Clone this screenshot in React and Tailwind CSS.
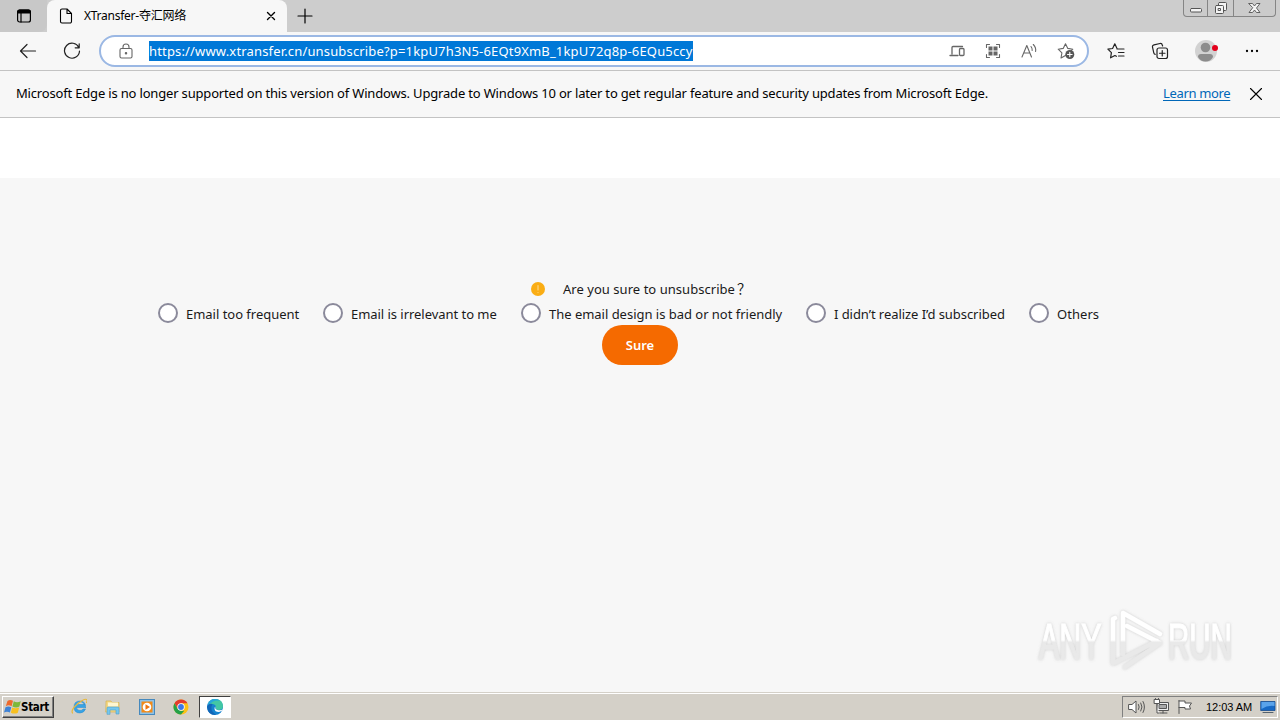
import React from 'react';

function Svg({ w = 16, h = 16, vb, className = '', children, sw = 1.1 }) {
  return (
    <svg width={w} height={h} viewBox={vb || `0 0 ${w} ${h}`} fill="none" stroke="currentColor" strokeWidth={sw} strokeLinecap="round" strokeLinejoin="round" className={`block shrink-0 ${className}`}>
      {children}
    </svg>
  );
}

function TabStrip() {
  return (
    <div className="flex h-8 w-full shrink-0 items-start bg-[#cdcdcd]">
      <div className="flex h-8 w-[47px] items-center justify-center rounded-br-lg bg-[#c8c8c8]">
        <Svg w={16} h={16} className="text-black" sw={1.2}>
          <rect x="1.6" y="2" width="12.8" height="12" rx="2" />
          <path d="M1.6 5V4a2 2 0 0 1 2-2h8.8a2 2 0 0 1 2 2v1z" fill="currentColor" />
          <path d="M5 5v9" />
        </Svg>
      </div>
      <div className="flex h-8 w-[240px] items-center rounded-t-lg bg-[#f7f7f7] pl-3">
        <Svg w={14} h={16} className="text-black">
          <path d="M8 1H3a1.500 1.500 0 0 0-1.500 1.500v11A1.500 1.500 0 0 0 3 15h8a1.500 1.500 0 0 0 1.500-1.500V5.500zM8 1v4.500h4.500" />
        </Svg>
        <span className="ml-[11px] w-[182px] whitespace-nowrap text-[12px] leading-4 tracking-[-0.25px] text-black">XTransfer-夺汇网络</span>
        <Svg w={10} h={10} className="text-black" sw={1.4}><path d="M1.500 1.500l7 7M8.500 1.500l-7 7" /></Svg>
      </div>
      <div className="flex h-8 w-[35px] items-center justify-center">
        <Svg w={16} h={16} className="text-black" sw={1.2}><path d="M8 1v14M1 8h14" /></Svg>
      </div>
      <div className="ml-auto mr-[4px] flex h-[17px] rounded-b border border-t-0 border-[#858585] bg-[#cbcbcb] text-[#555]">
        <div className="flex w-[24px] items-end justify-center border-r border-[#858585] pb-[3px]">
          <Svg w={12} h={5} sw={1}><rect x="0.5" y="0.5" width="11" height="3.500" rx="1" fill="#f4f4f4" /></Svg>
        </div>
        <div className="flex w-[26px] items-center justify-center border-r border-[#858585]">
          <Svg w={14} h={14} sw={1}>
            <rect x="4.500" y="1.500" width="8" height="8" rx="1" fill="#f4f4f4" />
            <rect x="1.500" y="4.500" width="8" height="8" rx="1" fill="#f4f4f4" />
            <rect x="4.500" y="7.500" width="2" height="2" />
          </Svg>
        </div>
        <div className="flex w-[41px] items-center justify-center">
          <Svg w={13} h={12} sw={0.9}><path d="M1 1.500h3.500l2 2.500 2-2.500H12L8.500 6l3.500 4.500H8.500l-2-2.500-2 2.500H1L4.500 6z" fill="#f4f4f4" /></Svg>
        </div>
      </div>
    </div>
  );
}

function Toolbar() {
  return (
    <div className="flex h-[39px] w-full shrink-0 items-center border-b border-[#c3c3c3] bg-[#f7f7f7]">
      <Svg w={18} h={16} className="ml-[19px] text-[#222]" sw={1.2}><path d="M8 1.500L1.500 8 8 14.500M1.500 8H16.500" /></Svg>
      <Svg w={18} h={18} className="ml-[26px] text-[#222]" sw={1.2}><path d="M15.800 5.500A7.500 7.500 0 1 0 16.500 9M16.200 1.800v4h-4" /></Svg>
      <div className="ml-[18px] flex h-8 w-[990px] items-center rounded-full border-2 border-[#9bb8e4] bg-white text-[#666]">
        <Svg w={14} h={16} className="ml-[18px]"><rect x="1" y="5.500" width="12" height="9.500" rx="1.500" /><path d="M4 5.500V4a3 3 0 0 1 6 0v1.500" /><circle cx="7" cy="10.300" r="0.700" fill="currentColor" /></Svg>
        <span className="ml-[16px] h-5 w-[544px] whitespace-nowrap bg-[#0078d7] text-[13px] leading-5 tracking-[0.162px] text-white">https://www.xtransfer.cn/unsubscribe?p=1kpU7h3N5-6EQt9XmB_1kpU72q8p-6EQu5ccy</span>
        <div className="ml-auto mr-[12px] flex items-center gap-5">
          <Svg w={16} h={14} sw={1.3}><path d="M3 10V3.500a1 1 0 0 1 1-1h9.500M1 11.500h8" /><rect x="10.500" y="4.500" width="4.500" height="7" rx="1" /></Svg>
          <Svg w={16} h={16} className="text-[#666]"><path d="M1.500 4.500V1.500H4.500M11.500 1.500h3V4.500M14.500 11.500v3H11.500M4.500 14.500H1.500V11.500" /><path d="M3.500 3.500h4v4h-4zM8.500 3.500h4v4h-4zM3.500 8.500h4v4h-4zM8.500 8.500h4v4h-4z" fill="currentColor" stroke="none" /></Svg>
          <Svg w={16} h={16}><path d="M1 14L5.800 2.500 10.500 14M2.600 10h6.400M10 3.500q1.500 1.700 1.200 4M12.300 1.500q3 3 2.300 7" /></Svg>
          <Svg w={18} h={18}><path d="M8.500 13.500L4 16l.9-5.200L1.200 7.200l5-.8L8.500 1.800l2.300 4.600 5 .8-1.500 1.500" /><circle cx="12.800" cy="12.500" r="4.500" fill="#555" stroke="none" /><path d="M12.800 10.200v4.600M10.500 12.500h4.600" stroke="white" /></Svg>
        </div>
      </div>
      <Svg w={18} h={18} className="ml-[18px] text-[#222]" sw={1.2}><path d="M10 6.500L7.800 1.800 5.600 6.500.9 7.200l3.500 3.500-.8 5.100 4.300-2.300 1.500.8M10 7h7M11.500 10.500H17M11.500 14H17" /></Svg>
      <Svg w={18} h={18} className="ml-[26px] text-[#222]" sw={1.2}><rect x="6" y="6" width="10.500" height="10.500" rx="2" /><path d="M11.250 8.500v5.500M8.500 11.250H14M4.200 12.300A2 2 0 0 1 2.800 10.800L1.500 5.200A2 2 0 0 1 3 2.800l6-1.300A2 2 0 0 1 11.300 3l.3 1" /></Svg>
      <Svg w={24} h={24} className="ml-[25px]"><circle cx="12" cy="12" r="11" fill="#d2d2d2" stroke="none" /><circle cx="11.500" cy="8.500" r="4.800" fill="#8c8c8c" stroke="none" /><path d="M4 18q0-3 3-3h9q3 0 3 3-2.500 4.500-7.500 4.500T4 18z" fill="#8c8c8c" stroke="none" /><circle cx="21" cy="9" r="3" fill="#e3001b" stroke="none" /></Svg>
      <Svg w={14} h={4} className="ml-[27px] text-black"><path d="M2 2h.01M7 2h.01M12 2h.01" strokeWidth="2.300" /></Svg>
    </div>
  );
}

function InfoBar() {
  return (
    <div className="flex h-[47px] w-full shrink-0 items-center border-b border-[#c3c3c3] bg-[#f7f7f7] pl-4 text-[13px] leading-5 text-black">
      <span className="-mt-[2px] w-[1147px] whitespace-nowrap tracking-[-0.175px]">Microsoft Edge is no longer supported on this version of Windows. Upgrade to Windows 10 or later to get regular feature and security updates from Microsoft Edge.</span>
      <span className="-mt-[2px] w-[67px] whitespace-nowrap tracking-[-0.34px] text-[#0067b8] underline underline-offset-2">Learn more</span>
      <Svg w={14} h={14} className="ml-[19px]" sw={1.1}><path d="M1.500 1.500l11 11M12.500 1.500l-11 11" /></Svg>
    </div>
  );
}

function Option({ label, width, spacing }) {
  return (
    <div className="flex h-6 items-center">
      <span className="size-5 shrink-0 rounded-full border-2 border-[#8b8a9b] bg-white" />
      <span className={`ml-2 mt-[1px] whitespace-nowrap ${width} ${spacing}`}>{label}</span>
    </div>
  );
}

function Watermark() {
  return (
    <svg width="214" height="76" viewBox="0 0 214 76" className="absolute bottom-[14px] right-[34px] overflow-visible">
      <defs>
        <filter id="glow" x="-10%" y="-10%" width="120%" height="120%">
          <feDropShadow dx="0" dy="0" stdDeviation="1.600" floodColor="#888" floodOpacity="0.400" />
        </filter>
        <linearGradient id="fade" x1="0" y1="0" x2="0" y2="76" gradientUnits="userSpaceOnUse">
          <stop offset="0.500" stopColor="#ffffff" />
          <stop offset="0.530" stopColor="#e9e9e9" />
        </linearGradient>
        <linearGradient id="fadeText" x1="0" y1="-57" x2="0" y2="19" gradientUnits="userSpaceOnUse">
          <stop offset="0.500" stopColor="#ffffff" />
          <stop offset="0.530" stopColor="#e9e9e9" />
        </linearGradient>
      </defs>
      <g filter="url(#glow)" fill="url(#fadeText)" stroke="url(#fadeText)" strokeWidth="1.200">
        <g transform="translate(7 57) scale(0.610 1)">
          <text x="0" y="0" fontSize="50" className="font-['Liberation_Sans',sans-serif]">ANY</text>
        </g>
        <g transform="translate(136 57) scale(0.590 1)">
          <text x="0" y="0" fontSize="50" className="font-['Liberation_Sans',sans-serif]">RUN</text>
        </g>
        <g fill="none" stroke="url(#fade)" strokeWidth="4.500" strokeLinecap="round" strokeLinejoin="round">
          <path d="M83 16l-2 1v44l3-1 41-21M91 52V11l37 21M95 24l33 17-35 24" />
        </g>
      </g>
    </svg>
  );
}

function PageContent() {
  return (
    <div className="relative flex h-[574px] w-full shrink-0 flex-col bg-[#f7f7f7]">
      <div className="h-[60px] bg-white" />
      <div className="flex flex-col items-center pt-[99px] text-[13px] leading-6 text-[#1a1a1a]">
        <div className="flex h-6 w-[219px] items-center">
          <Svg w={14} h={14}><circle cx="7" cy="7" r="7" fill="#faad14" stroke="none" /><path d="M7 3.500v4.500M7 10.500v.1" stroke="#ffd98a" /></Svg>
          <span className="ml-[18.500px] w-[173px] whitespace-nowrap tracking-[0.040px]">Are you sure to unsubscribe</span>
          <span className="ml-[2px] text-[14px]">？</span>
        </div>
        <div className="flex h-6 w-[964px] gap-6">
          <Option label="Email too frequent" width="w-[113px]" spacing="tracking-[-0.020px]" />
          <Option label="Email is irrelevant to me" width="w-[146px]" spacing="tracking-[-0.040px]" />
          <Option label="The email design is bad or not friendly" width="w-[233px]" spacing="tracking-[-0.020px]" />
          <Option label="I didn’t realize I’d subscribed" width="w-[171px]" spacing="tracking-[-0.060px]" />
          <Option label="Others" width="w-[42px]" spacing="tracking-[0.050px]" />
        </div>
        <button className="h-10 w-[76px] rounded-full bg-[#f56a00] pb-px text-[13px] font-semibold text-white">Sure</button>
      </div>
      <Watermark />
    </div>
  );
}

function Taskbar() {
  return (
    <div className="flex h-[28px] w-full shrink-0 items-center border-t border-[#d4d0c8] bg-[#d4d0c8] shadow-[inset_0_1px_0_#fff]">
      <div className="ml-[2px] flex h-[22px] w-[52px] items-center border border-b-[#404040] border-l-white border-r-[#404040] border-t-white pl-[1px] shadow-[inset_-1px_-1px_0_#808080]">
        <Svg w={17} h={16} vb="0 0 17 16">
          <path d="M3.500 2Q6 0 9 1.800L7.600 7.200Q4.500 5.500 1.800 7.200z" fill="#ef6a2c" stroke="none" />
          <path d="M9.800 2.300q3 1.800 7 0l-1.400 5.200q-3.200 1.800-7 0z" fill="#7db83a" stroke="none" />
          <path d="M1.500 8.200q2.800-1.500 5.800 0l-1.400 5.300Q3 12.200 0 13.500z" fill="#3f83d6" stroke="none" />
          <path d="M8.200 8.500q3 1.500 7 0l-1.400 5.200q-3 1.800-7 0z" fill="#f8c020" stroke="none" />
        </Svg>
        <span className="font-['DejaVu_Sans_Condensed','DejaVu_Sans',sans-serif] text-[11.5px] font-bold leading-4 tracking-[-0.300px] text-black">Start</span>
      </div>
      <div className="ml-[17px] flex items-center gap-[18px]">
        <Svg w={16} h={17}><path d="M13 6.500H5.500q.7-2.800 3.700-2.800T13 6.500zM14.500 9.500H5.500q.4 3 3.500 3 2.200 0 3-1.500h2.500Q13 15 9 15q-6 0-6-6t6-6q6 0 5.500 6.500z" fill="#36a3e6" fillRule="evenodd" stroke="#2388cd" strokeWidth="0.500" /><path d="M1.500 15q-2-3 5-9t9-4.500q1.200.7 0 3" stroke="#e8b83a" strokeWidth="1.200" /></Svg>
        <Svg w={16} h={16}><path d="M1 3.500V2h5l1 1.500h7V13H1z" fill="#f4d783" stroke="#d5b350" strokeWidth="0.700" /><path d="M3 3.500h10v4H3z" fill="#fff6d0" stroke="none" /><path d="M2 15V9q0-1 1-1h10q1 0 1 1v6h-3v-4H5v4z" fill="#75c7ed" stroke="#4b9fca" strokeWidth="0.600" /></Svg>
        <Svg w={16} h={16}><rect x="0.500" y="0.500" width="15" height="15" fill="#8fc3e8" stroke="#4689bd" /><rect x="2.500" y="2.500" width="11" height="11" fill="#f28a18" stroke="none" /><circle cx="8" cy="8" r="4.300" fill="#fff" stroke="none" /><path d="M6.500 5.300v5.400L11 8z" fill="#ee7510" stroke="none" /></Svg>
        <Svg w={16} h={16}><circle cx="8" cy="8" r="7.500" fill="#fbc116" stroke="none" /><path d="M1.500 4.250A7.500 7.500 0 0 1 14.500 4.250H8L4.800 9.800z" fill="#e33b2e" stroke="none" /><path d="M1.500 4.250L4.750 9.900 8 11.750h3.250L8 15.500A7.500 7.500 0 0 1 1.500 4.250z" fill="#24a148" stroke="none" /><circle cx="8" cy="8" r="3.700" fill="#fff" stroke="none" /><circle cx="8" cy="8" r="2.900" fill="#3b78e7" stroke="none" /></Svg>
      </div>
      <div className="ml-[10px] flex h-[22px] w-[32px] items-center justify-center border border-b-white border-l-[#404040] border-r-white border-t-[#404040] bg-white">
        <Svg w={18} h={18}>
          <circle cx="9" cy="9" r="8" fill="#1583cf" stroke="none" />
          <path d="M2 6Q4 1 9 1q7.500 0 8 7 0 4-4.500 4-3.500 0-2.500-2.500Q10 6 6 6T2 8z" fill="#43c7a4" stroke="none" />
          <path d="M2 6Q4 1 9 1q3 0 5 2Q8 1 2 8z" fill="#25a6dd" stroke="none" />
          <path d="M9.500 8.500Q8.500 11 11.500 12q3 1 5.500-.8Q15.500 14 13 14q-4.500 0-4.500-3.500 0-1.300 1-2z" fill="#fff" stroke="none" />
          <path d="M1 9q1.500-4 5.500-3Q3 12 10 17 2 17.500 1 9z" fill="#1266b7" stroke="none" />
        </Svg>
      </div>
      <div className="ml-auto mr-[2px] flex h-[22px] w-[156px] items-center border border-b-white border-l-[#808080] border-r-white border-t-[#808080] pl-[5px] text-[#555]">
        <Svg w={18} h={16} sw={1}><path d="M1 5.500h3L8 2v12l-4-3.500H1z" fill="#fff" /><path d="M10.500 5.500q1.500 2.500 0 5M12.800 4q2.500 4 0 8M15 2.500q3 5.500 0 11" /></Svg>
        <Svg w={17} h={17} className="ml-[7px]" sw={1}><rect x="4.500" y="4.500" width="11" height="8" fill="#eee" /><rect x="6.500" y="6.500" width="7" height="4" fill="#aaa" /><path d="M7 15h7M10 12.500V15M1.500 1.500h5v4h-5zM2.500 1V.5M5.500 1V.5M4 5.500V15h2" fill="#fff" /></Svg>
        <Svg w={16} h={16} className="ml-[7px]" sw={1}><path d="M2 1.500v13M2 2h6v2h6.500l-2 3 1 3H8V8.500H2" fill="#fff" /></Svg>
        <span className="ml-[13px] w-[50px] whitespace-nowrap font-['Liberation_Sans',sans-serif] text-[11px] leading-4 tracking-[-0.050px] text-black">12:03 AM</span>
        <Svg w={16} h={14} className="ml-[4px]" sw={0.8}><path d="M1 1.500h14v9H1z" fill="#1769c5" stroke="#154b8f" /><path d="M1.500 2h13v4q-7-1-13 3z" fill="#5aa3ea" stroke="none" /><path d="M3 12.500h10" stroke="#345" /></Svg>
      </div>
    </div>
  );
}

export default function App() {
  return (
    <div className="flex h-[720px] w-[1280px] flex-col overflow-hidden bg-[#f7f7f7] font-['Noto_Sans','Noto_Sans_CJK_SC',sans-serif]">
      <TabStrip />
      <Toolbar />
      <InfoBar />
      <PageContent />
      <Taskbar />
    </div>
  );
}
